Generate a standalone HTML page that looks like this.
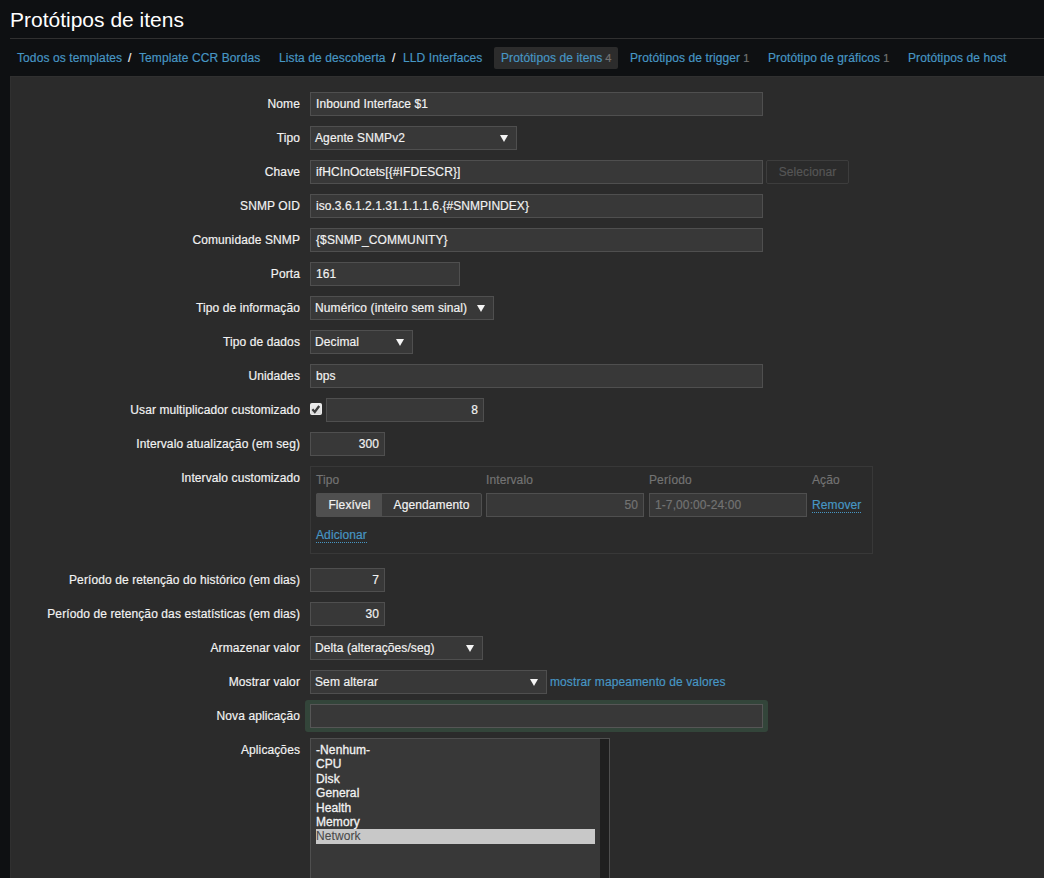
<!DOCTYPE html>
<html lang="pt-BR">
<head>
<meta charset="utf-8">
<title>Protótipos de itens</title>
<style>
*{box-sizing:border-box;margin:0;padding:0}
html,body{width:1044px;height:878px;overflow:hidden;background:#0e1012;}
body{font-family:"Liberation Sans",Arial,sans-serif;font-size:12px;color:#f2f2f2;position:relative;line-height:14px;letter-spacing:0.1px;-webkit-text-stroke:0.18px}
h1{-webkit-text-stroke:0;letter-spacing:0;position:absolute;left:10px;top:8px;font-size:21px;font-weight:normal;line-height:24px;color:#fff;white-space:nowrap}
.hr{position:absolute;left:10px;top:38px;width:1034px;height:1px;background:#303030}
.nav{position:absolute;top:46px;left:0;height:24px;white-space:nowrap}
.nav span,.nav a{position:absolute;top:0;line-height:24px;height:24px;color:#4796c4;text-decoration:none;white-space:nowrap}
.nav .sep{color:#f2f2f2}
.nav .sel{background:#2c2c2c;border-radius:2px;padding:0 6px 0 7px;top:1px;height:22px;line-height:22px}
.nav sup{color:#737373;font-size:11px;vertical-align:baseline;margin-left:3px}
.panel{position:absolute;left:10px;top:76px;width:1034px;height:802px;background:#2b2b2b;border-left:1px solid #303030;border-top:1px solid #303030}
.lbl{position:absolute;right:744px;width:300px;text-align:right;line-height:24px;height:24px;white-space:nowrap;color:#f2f2f2}
.inp{position:absolute;left:310px;height:24px;background:#383838;border:1px solid #4f4f4f;line-height:22px;padding:0 5px;white-space:nowrap;color:#f2f2f2;overflow:hidden}
.sel{ }
.inp.r{text-align:right}
.arrow{position:absolute;right:8px;top:7.5px;width:0;height:0;border-left:4px solid transparent;border-right:4px solid transparent;border-top:7.5px solid #f5f5f5}
.select{padding:0 4px}
a{color:#4796c4;text-decoration:none}
.btn{position:absolute;left:766px;top:160px;width:83px;height:24px;border:1px solid #3d3d3d;border-radius:2px;color:#565656;text-align:center;line-height:22px;background:transparent}
.grey{color:#737373}
.li{-webkit-text-stroke:0.3px;position:absolute;left:316px;width:279px;height:14px;line-height:14px;white-space:nowrap}
.dot{border-bottom:1px dotted #4796c4}
</style>
</head>
<body>
<h1>Protótipos de itens</h1>
<div class="hr"></div>
<div class="nav">
<a style="left:17px">Todos os templates</a>
<span class="sep" style="left:128px">/</span>
<a style="left:139px">Template CCR Bordas</a>
<a style="left:279px">Lista de descoberta</a>
<span class="sep" style="left:392px">/</span>
<a style="left:403px">LLD Interfaces</a>
<a class="sel" style="left:494px">Protótipos de itens<sup>4</sup></a>
<a style="left:630px">Protótipos de trigger<sup>1</sup></a>
<a style="left:768px">Protótipo de gráficos<sup>1</sup></a>
<a style="left:908px">Protótipos de host</a>
</div>
<div class="panel"></div>

<div class="lbl" style="top:92px">Nome</div>
<div class="inp" style="top:92px;width:453px">Inbound Interface $1</div>

<div class="lbl" style="top:126px">Tipo</div>
<div class="inp select" style="top:126px;width:207px">Agente SNMPv2<span class="arrow"></span></div>

<div class="lbl" style="top:160px">Chave</div>
<div class="inp" style="top:160px;width:453px">ifHCInOctets[{#IFDESCR}]</div>
<div class="btn">Selecionar</div>

<div class="lbl" style="top:194px">SNMP OID</div>
<div class="inp" style="top:194px;width:453px;letter-spacing:0.04px">iso.3.6.1.2.1.31.1.1.1.6.{#SNMPINDEX}</div>

<div class="lbl" style="top:228px">Comunidade SNMP</div>
<div class="inp" style="top:228px;width:453px">{$SNMP_COMMUNITY}</div>

<div class="lbl" style="top:262px">Porta</div>
<div class="inp" style="top:262px;width:150px">161</div>

<div class="lbl" style="top:296px">Tipo de informação</div>
<div class="inp select" style="top:296px;width:184px">Numérico (inteiro sem sinal)<span class="arrow"></span></div>

<div class="lbl" style="top:330px">Tipo de dados</div>
<div class="inp select" style="top:330px;width:103px">Decimal<span class="arrow"></span></div>

<div class="lbl" style="top:364px">Unidades</div>
<div class="inp" style="top:364px;width:453px">bps</div>

<div class="lbl" style="top:398px">Usar multiplicador customizado</div>
<svg style="position:absolute;left:310px;top:403px" width="12" height="12" viewBox="0 0 12 12"><defs><linearGradient id="cg" x1="0" y1="0" x2="0" y2="1"><stop offset="0" stop-color="#ececec"/><stop offset="1" stop-color="#dadada"/></linearGradient></defs><rect x="0.5" y="0.5" width="11" height="11" rx="1" fill="url(#cg)" stroke="#ebebeb"/><path d="M2.4 6.2 L4.8 8.9 L9.2 3" stroke="#3c3c3c" stroke-width="2.3" fill="none"/></svg>
<div class="inp r" style="top:398px;left:326px;width:158px">8</div>

<div class="lbl" style="top:432px">Intervalo atualização (em seg)</div>
<div class="inp r" style="top:432px;width:75px">300</div>

<div class="lbl" style="top:466px">Intervalo customizado</div>
<div style="position:absolute;left:310px;top:466px;width:563px;height:88px;border:1px solid #383838"></div>
<div class="grey" style="position:absolute;left:316px;top:473px">Tipo</div>
<div class="grey" style="position:absolute;left:486px;top:473px">Intervalo</div>
<div class="grey" style="position:absolute;left:649px;top:473px">Período</div>
<div class="grey" style="position:absolute;left:812px;top:473px">Ação</div>
<div style="position:absolute;left:316px;top:493px;width:166px;height:24px;border:1px solid #4f4f4f;background:#383838;border-radius:2px"></div>
<div style="position:absolute;left:316px;top:493px;width:66px;height:24px;background:#4f4f4f;text-align:center;line-height:24px;border-radius:2px 0 0 2px;padding-left:1px">Flexível</div>
<div style="position:absolute;left:382px;top:494px;width:99px;height:22px;text-align:center;line-height:22px">Agendamento</div>
<div class="inp r grey" style="top:493px;left:486px;width:158px;color:#737373">50</div>
<div class="inp grey" style="top:493px;left:649px;width:158px;color:#737373">1-7,00:00-24:00</div>
<a class="dot" style="position:absolute;left:812px;top:498px">Remover</a>
<a class="dot" style="position:absolute;left:316px;top:528px">Adicionar</a>

<div class="lbl" style="top:568px">Período de retenção do histórico (em dias)</div>
<div class="inp r" style="top:568px;width:75px">7</div>

<div class="lbl" style="top:602px">Período de retenção das estatísticas (em dias)</div>
<div class="inp r" style="top:602px;width:75px">30</div>

<div class="lbl" style="top:636px">Armazenar valor</div>
<div class="inp select" style="top:636px;width:173px">Delta (alterações/seg)<span class="arrow"></span></div>

<div class="lbl" style="top:670px">Mostrar valor</div>
<div class="inp select" style="top:670px;width:237px">Sem alterar<span class="arrow"></span></div>
<a style="position:absolute;left:550px;top:675px">mostrar mapeamento de valores</a>

<div class="lbl" style="top:704px">Nova aplicação</div>
<div style="position:absolute;left:305px;top:700px;width:463px;height:32px;background:#33453a;border-radius:3px"></div>
<div class="inp" style="top:704px;width:453px;border-color:#565656"></div>

<div class="lbl" style="top:738px">Aplicações</div>
<div style="position:absolute;left:310px;top:738px;width:300px;height:150px;background:#383838;border:1px solid #4f4f4f"></div>
<div style="position:absolute;left:600px;top:739px;width:9px;height:150px;background:#1f1f1f"></div>
<div class="li" style="top:743px">-Nenhum-</div>
<div class="li" style="top:757px">CPU</div>
<div class="li" style="top:772px">Disk</div>
<div class="li" style="top:786px">General</div>
<div class="li" style="top:801px">Health</div>
<div class="li" style="top:815px">Memory</div>
<div class="li" style="top:829px;height:15px;background:#c8c8c8;color:#4a4a4a;-webkit-text-stroke:0.1px">Network</div>
</body>
</html>
